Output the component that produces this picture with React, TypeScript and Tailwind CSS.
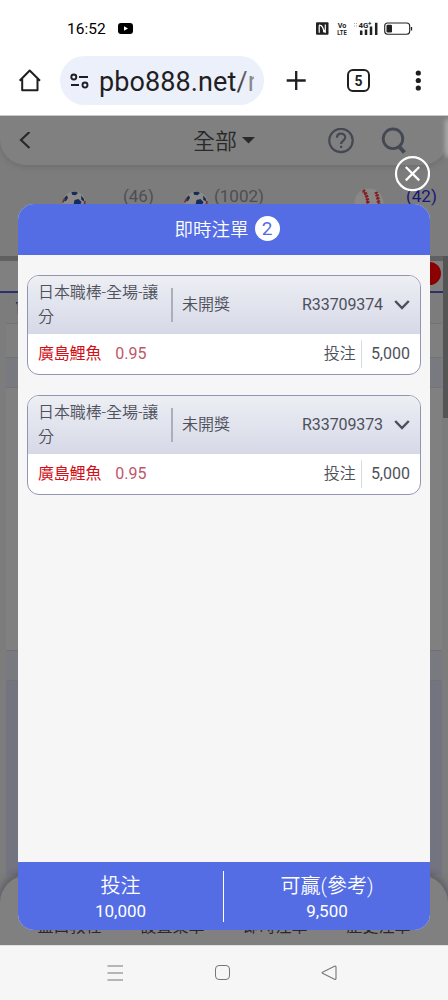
import React from "react";

type Bet = { id: string; title: string; status: string; pick: string; odds: string; stake: string };

const bets: Bet[] = [
  { id: "R33709374", title: "日本職棒-全場-讓分", status: "未開獎", pick: "廣島鯉魚", odds: "0.95", stake: "5,000" },
  { id: "R33709373", title: "日本職棒-全場-讓分", status: "未開獎", pick: "廣島鯉魚", odds: "0.95", stake: "5,000" },
];

const navItems = ["盤口教程", "設置菜單", "即時注單", "歷史注單"];

function StatusBar() {
  return (
    <div className="flex h-[56px] shrink-0 items-center pl-[67px] pt-[2px] text-black">
      <span className="w-[51px] pt-[2px] text-[15.500px] leading-none">16:52</span>
      <svg className="mb-px" width="15" height="11" viewBox="0 0 15 11">
        <rect width="15" height="11" rx="3" fill="#000" />
        <path d="M6 3.200v4.600l4-2.300z" fill="#fff" />
      </svg>
      <svg className="ml-[183px]" width="98" height="16" viewBox="0 0 98 16">
        <rect x="0" y="1.300" width="12.500" height="12.500" rx="1" fill="#222" />
        <path d="M3.200 11.800V4.500M3.200 3.800q4.500 1 4.500 7.500M5.300 4.300l4 7.500V3.500" fill="none" stroke="#fff" strokeWidth="1.200" />
        <text x="26" y="6.800" fontSize="7.200" fontWeight="700" textAnchor="middle" fill="#222" fontFamily="Roboto">Vo</text>
        <text x="26" y="14" fontSize="7.800" fontWeight="700" textAnchor="middle" textLength="9.500" lengthAdjust="spacingAndGlyphs" fill="#222" fontFamily="Roboto">LTE</text>
        <path d="M38 2.500h1M40 2.500h1M38 5h1M40 5h1" stroke="#aaa" />
        <text x="42.500" y="7" fontSize="8" fontWeight="700" textLength="10" lengthAdjust="spacingAndGlyphs" fill="#222" fontFamily="Roboto">4G</text>
        <path d="M52.300 2.400h3M53.800 .9v3" stroke="#222" strokeWidth=".8" />
        <path d="M45.200 14V9.500M50 14V8.500M55 14V5.500M60.200 14V1.700" stroke="#222" strokeWidth="2.500" />
        <rect x="68.700" y="2" width="25" height="11.300" rx="3" fill="none" stroke="#222" strokeWidth="1.100" />
        <rect x="70.500" y="3.800" width="5.500" height="7.700" rx="1.300" fill="#222" />
        <path d="M95.500 6v3.500" stroke="#222" strokeWidth="1.300" />
      </svg>
    </div>
  );
}

function BrowserBar() {
  return (
    <div className="flex h-[60px] shrink-0 items-start border-b border-[#c9c9c9] pl-[18px] text-[#1f1f23]">
      <svg className="mt-[12px] shrink-0" width="24" height="25" viewBox="0 0 24 25" fill="none" stroke="currentColor" strokeWidth="2">
        <path d="M1.700 12.800L11.700 2.500L22 12.800M4.200 11V22.300H19.500V11" strokeLinejoin="round" />
      </svg>
      <div className="ml-[18px] flex h-[49px] w-[204px] items-center overflow-hidden rounded-full bg-[#ecf0fa] pl-[9px]">
        <svg className="shrink-0" width="20" height="18" viewBox="0 0 20 18" fill="none" stroke="currentColor" strokeWidth="1.900">
          <circle cx="4.800" cy="5" r="2.500" />
          <path d="M10 5h9M2 13h8" />
          <circle cx="16" cy="13" r="2.500" />
        </svg>
        <div className="relative ml-[10px] w-[155px] overflow-hidden whitespace-nowrap pt-[3px] text-[27px] leading-[40px] tracking-[0.100px]">
          pbo888.net/r
          <div className="absolute inset-y-0 right-0 w-[20px] bg-linear-to-r from-[#ecf0fa]/0 to-[#ecf0fa]/60" />
        </div>
      </div>
      <svg className="ml-[22px] mt-[14px]" width="20" height="21" viewBox="0 0 20 21" stroke="currentColor" strokeWidth="2.300">
        <path d="M.7 10.500h19M10.200 1v19" />
      </svg>
      <div className="ml-[41px] mt-[13px] flex h-[23px] w-[23px] items-center justify-center rounded-[6px] border-2 border-current text-[14px] font-bold leading-none">5</div>
      <svg className="ml-[45px] mt-[13px]" width="7" height="24" viewBox="0 0 7 24" fill="currentColor">
        <circle cx="3.300" cy="4" r="2.600" /><circle cx="3.300" cy="11.500" r="2.600" /><circle cx="3.300" cy="19" r="2.600" />
      </svg>
    </div>
  );
}

function SoccerBall() {
  return (
    <svg width="24" height="24" viewBox="0 0 24 24">
      <circle cx="12" cy="12" r="11.500" fill="#8d8a88" />
      <path d="M9.500 1l4.500-.3 2 1.300-2.500 2.200-3.500-.5zM2.500 6.500l2.500-2.200 1 2.700-2 3-2 .3zM19 4.500l2.800 3 .6 3-3-1.600zM12.500 9l4-1 3 3-2 4-6-1z" fill="#142c5c" />
      <path d="M.8 11.500l1.700-4M22.200 15l.8-5" stroke="#753329" strokeWidth="1.800" />
    </svg>
  );
}

function PageHeader() {
  return (
    <div className="relative flex h-[49px] shrink-0 items-center rounded-b-[26px] bg-[#808080] pl-[19px] text-[#292929] shadow-[0_2px_6px_rgba(0,0,0,0.12)]">
      <svg width="12" height="18" viewBox="0 0 12 18" fill="none" stroke="currentColor" strokeWidth="2.200"><path d="M10.500 0L2 8l8.500 8" /></svg>
      <span className="ml-[162px] pt-[2px] text-[22px] font-[350] leading-none">全部</span>
      <svg className="ml-[5px]" width="13" height="7" viewBox="0 0 13 7"><path d="M0 0h13L6.500 6.500z" fill="currentColor" /></svg>
      <svg className="ml-[73px]" width="26" height="26" viewBox="0 0 26 26" fill="none" stroke="#444853" strokeWidth="2.200">
        <circle cx="13" cy="12.500" r="11.700" />
        <path d="M9 9.700C9 4.300 17.200 4.500 17.200 9.500c0 3-4.100 3.200-4.100 6.500M13.100 17.800v2.300" />
      </svg>
      <svg className="ml-[27px]" width="26" height="28" viewBox="0 0 26 28" fill="none" stroke="#444853">
        <circle cx="12" cy="11.800" r="9.800" strokeWidth="2.800" />
        <path d="M17.500 19l6 6.500" strokeWidth="4" />
      </svg>
    </div>
  );
}

function SportsStrip() {
  return (
    <div className="flex h-[91px] shrink-0 items-start pl-[62px] pt-[21px] text-[17px] leading-[20px] text-[#4c4e55]">
      <div className="mt-[5px] w-[61px]"><SoccerBall /></div>
      <span className="w-[61px]">(46)</span>
      <div className="mt-[5px] w-[30px]"><SoccerBall /></div>
      <span className="w-[140px]">(1002)</span>
      <svg className="mt-[2px]" width="30" height="30" viewBox="0 0 30 30">
        <circle cx="15" cy="15" r="14.500" fill="#8a8886" />
        <path d="M9 2.500Q15 7 14 27M22 4q3 8 4 23" fill="none" stroke="#871d24" strokeWidth="3.500" strokeDasharray="2 1" />
        <path d="M9 2.500Q15 7 14 27M22 4q3 8 4 23" fill="none" stroke="#801e24" />
      </svg>
      <span className="ml-[22px] text-[#171777]">(42)</span>
    </div>
  );
}

function Backdrop() {
  return (
    <div className="flex h-full flex-col bg-[#7c7c7c]">
      <PageHeader />
      <SportsStrip />
      <div className="h-[5px] shrink-0 bg-[#606060]" />
      <div className="flex h-[32px] shrink-0 justify-end border-b-2 border-[#2b3267] bg-[#808080] pr-[7px]">
        <div className="mt-px h-[23px] w-[23px] rounded-full bg-[#8b0000]" />
      </div>
      <div className="h-[30px] shrink-0 pl-[15px] pt-[3px] text-[14px] leading-[22px] text-[#272d68]">官</div>
      <div className="mx-[6px] h-[35px] shrink-0 border-y border-[#737376] bg-[#7f7f80]" />
      <div className="mx-[6px] h-[30px] shrink-0 border-b border-[#737376] bg-[#797a80]" />
      <div className="mx-[6px] h-[263px] shrink-0 border-b border-[#707073] bg-[#808080]" />
      <div className="mx-[6px] h-[30px] shrink-0 border-b border-[#717177] bg-[#797a7f]" />
      <div className="mx-[6px] h-[194px] shrink-0 bg-[#747480]" />
      <div className="relative flex h-[70px] shrink-0 justify-center gap-[39px] rounded-t-[28px] bg-[#808080] pt-[40px] text-[16px] leading-[24px] text-[#292929] shadow-[0_-2px_6px_2px_rgba(40,40,60,0.35)]">
        {navItems.map((label) => <span key={label}>{label}</span>)}
      </div>
    </div>
  );
}

function BetCard({ bet }: { bet: Bet }) {
  return (
    <article className="h-[100px] overflow-hidden rounded-[12px] border border-[#9195b2] bg-white text-[16px] text-[#4e515c]">
      <div className="flex h-[58px] items-center bg-linear-to-b from-[#edeff4] to-[#d6d8e7] pl-[10px] pr-[10px]">
        <div className="w-[124px] font-[350] leading-[24px] tracking-[-0.100px]">{bet.title}</div>
        <div className="ml-[9px] h-[34px] w-[2px] bg-[#acaebc]" />
        <div className="ml-[9px] font-[350]">{bet.status}</div>
        <div className="ml-auto tracking-[-0.100px]">{bet.id}</div>
        <svg className="ml-[11px]" width="16" height="10" viewBox="0 0 16 10" fill="none" stroke="currentColor" strokeWidth="2.500"><path d="M1.200 1L8 8l6.800-7" /></svg>
      </div>
      <div className="flex h-[40px] items-center px-[10px]">
        <span className="tracking-[-0.200px] text-[#d20f18]">{bet.pick}</span>
        <span className="ml-[14px] text-[#c0566a]">{bet.odds}</span>
        <span className="ml-auto font-[350]">投注</span>
        <div className="ml-[5px] h-[28px] w-px bg-[#d9dae3]" />
        <span className="ml-[9px]">{bet.stake}</span>
      </div>
    </article>
  );
}

function BetDialog() {
  return (
    <section className="absolute left-[18px] top-[88px] flex h-[726px] w-[412px] flex-col rounded-[16px] bg-[#f6f6f6]">
      <header className="flex h-[51px] shrink-0 items-center justify-center gap-[6px] rounded-t-[16px] bg-[#546de5] pl-[6px] text-[18.500px] text-white">
        <span className="pt-[3px] font-[350]">即時注單</span>
        <span className="mb-[2px] flex h-[25px] w-[25px] items-center justify-center rounded-full bg-white text-[19px] leading-none text-[#546de5]">2</span>
      </header>
      <div className="flex flex-1 flex-col gap-[20px] px-[9px] pt-[20px]">
        {bets.map((bet) => <BetCard key={bet.id} bet={bet} />)}
      </div>
      <footer className="flex h-[68px] shrink-0 items-center rounded-b-[16px] bg-[#546de5] text-center text-white">
        <div className="w-[205px] pt-[2px]"><div className="pt-px text-[20px] font-[350] leading-[26px]">投注</div><div className="text-[17px] leading-[24px]">10,000</div></div>
        <div className="h-[51px] w-px bg-white" />
        <div className="flex-1 pt-[2px]"><div className="pt-px text-[20px] font-[350] leading-[26px]">可贏(參考)</div><div className="text-[17px] leading-[24px]">9,500</div></div>
      </footer>
      <button aria-label="關閉" className="absolute -top-[48px] right-0 h-[36px] w-[36px]">
        <svg width="36" height="36" viewBox="0 0 36 36" fill="none" stroke="#fff" strokeWidth="2.200"><circle cx="18.500" cy="17.700" r="16.500" /><path d="M11.800 11l13.400 13.400M25.200 11L11.800 24.400" /></svg>
      </button>
    </section>
  );
}

function SystemNav() {
  return (
    <div className="flex h-[55px] shrink-0 items-center border-t border-[#e0e0e0] bg-[#f6f6f6] pl-[107px]">
      <svg width="16" height="16" viewBox="0 0 16 16" stroke="#777" strokeWidth="1.200"><path d="M0.500 1h15.500M0.500 8h15.500M0.500 15h15.500" /></svg>
      <div className="mb-px ml-[92px] h-[15px] w-[15px] rounded-[4px] border border-[#777]" />
      <svg className="ml-[91px]" width="17" height="16" viewBox="0 0 17 16" fill="none" stroke="#777" strokeWidth="1.100"><path d="M1.500 7.200L13.500 1.200Q15 .8 15 2.200V13.200Q15 14.800 13.500 14.200L1.500 8.300Q.5 7.700 1.500 7.200Z" /></svg>
    </div>
  );
}

export default function App() {
  return (
    <main className="flex h-[1000px] w-[448px] flex-col overflow-hidden bg-white font-['Roboto','Noto_Sans_CJK_TC',sans-serif]">
      <StatusBar />
      <BrowserBar />
      <div className="relative h-[829px] shrink-0 overflow-hidden">
        <Backdrop />
        <div className="absolute right-0 top-[140px] h-[162px] w-[5px] bg-[#555]" />
        <div className="absolute -right-[3px] top-[3px] h-[38px] w-[6px] rounded-full bg-[#aaa] blur-[2px]" />
        <BetDialog />
      </div>
      <SystemNav />
    </main>
  );
}
